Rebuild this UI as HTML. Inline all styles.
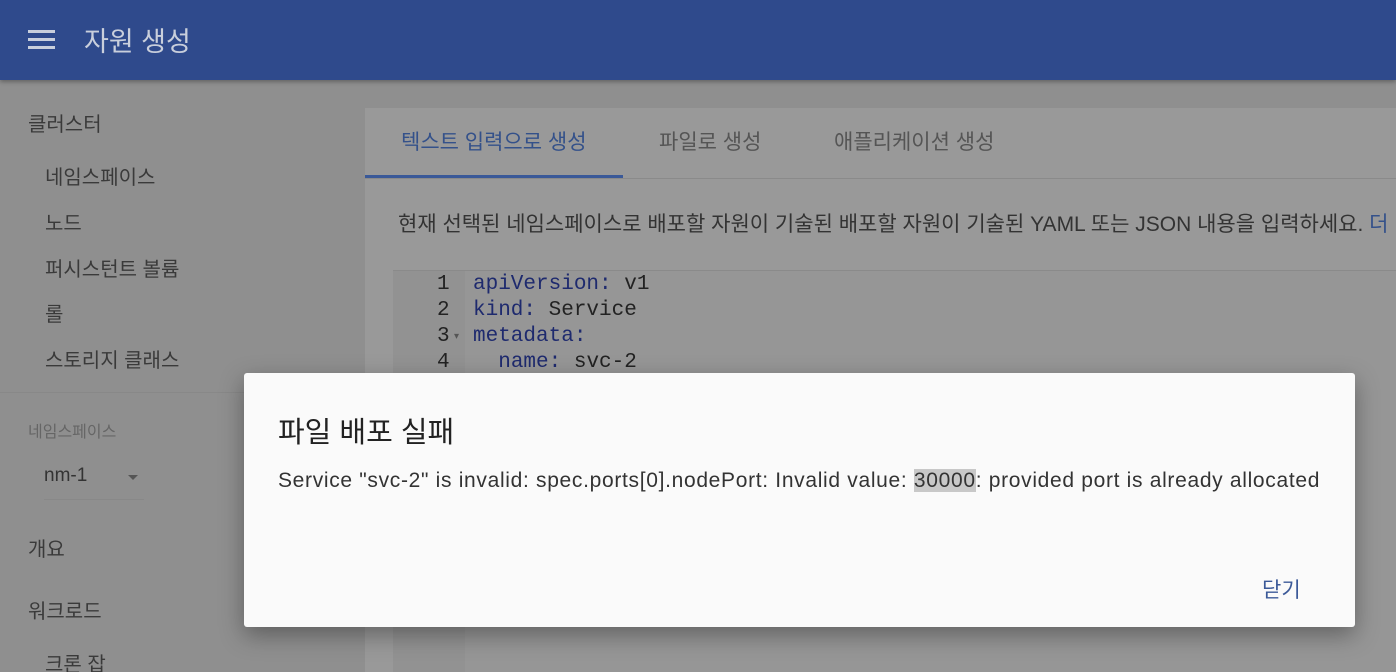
<!DOCTYPE html>
<html><head><meta charset="utf-8"><style>
*{margin:0;padding:0;box-sizing:border-box}
html,body{width:1396px;height:672px;overflow:hidden}
body{background:#8f8f8f;font-family:"Liberation Sans","Noto Sans CJK KR",sans-serif;position:relative}
.hdr{position:absolute;left:0;top:0;width:1396px;height:80px;background:#2f4a8c;box-shadow:0 2px 4px rgba(0,0,0,.3)}
.hdr .t{position:absolute;left:84px;top:20px;color:#c9cfdc;font-size:27px}
.ham{position:absolute;left:28px;top:30px;width:27px}
.ham i{display:block;height:3px;background:#c9cfdc;margin-bottom:5px}
.s{position:absolute;color:#3a3a3a;font-size:20px;white-space:nowrap}
.card{position:absolute;left:365px;top:108px;width:1040px;height:564px;background:#999}
.tabs{position:absolute;left:0;top:0;width:100%;height:71px;border-bottom:1px solid #8a8a8a}
.tab{position:absolute;top:18px;font-size:21px;color:#555}
.code{position:absolute;left:28px;top:162px;width:1010px;height:420px;background:#969696;border-top:1px solid #8a8a8a}
.gut{position:absolute;left:0;top:0;width:72px;height:100%;background:#929292}
.ln{position:absolute;font-family:"Liberation Mono",monospace;font-size:21px;color:#222;white-space:pre}
.dlg{position:absolute;left:244px;top:373px;width:1111px;height:254px;background:#fafafa;border-radius:3px;box-shadow:0 8px 24px rgba(0,0,0,.35)}
</style></head><body>
<div class="hdr"><div class="ham"><i></i><i></i><i></i></div><div class="t">자원 생성</div></div>
<div class="s" style="left:28px;top:108px">클러스터</div>
<div class="s" style="left:45px;top:161px">네임스페이스</div>
<div class="s" style="left:45px;top:207px">노드</div>
<div class="s" style="left:45px;top:253px">퍼시스턴트 볼륨</div>
<div class="s" style="left:45px;top:298px">롤</div>
<div class="s" style="left:45px;top:344px">스토리지 클래스</div>
<div style="position:absolute;left:0;top:392px;width:365px;height:1px;background:#888"></div>
<div class="s" style="left:28px;top:418px;font-size:16px;color:#666">네임스페이스</div>
<div class="s" style="left:44px;top:465px;font-size:19px;color:#333">nm-1</div>
<div style="position:absolute;left:128px;top:475px;border:5px solid transparent;border-top-color:#555"></div>
<div style="position:absolute;left:44px;top:499px;width:100px;height:1px;background:#888"></div>
<div class="s" style="left:28px;top:533px">개요</div>
<div class="s" style="left:28px;top:595px">워크로드</div>
<div class="s" style="left:45px;top:648px">크론 잡</div>
<div class="card">
<div class="tabs">
<div class="tab" style="left:36px;color:#34518a">텍스트 입력으로 생성</div>
<div class="tab" style="left:294px">파일로 생성</div>
<div class="tab" style="left:469px">애플리케이션 생성</div>
<div style="position:absolute;left:0;top:67px;width:258px;height:3px;background:#3a5998"></div>
</div>
<div class="s" style="left:33px;top:100px;font-size:21px;color:#333">현재 선택된 네임스페이스로 배포할 자원이 기술된 배포할 자원이 기술된 YAML 또는 JSON 내용을 입력하세요. <span style="color:#34518a">더</span></div>
<div class="code"><div class="gut"></div>
<div class="ln" style="left:44px;top:2px">1</div><div class="ln" style="left:80px;top:2px"><span style="color:#1e2a6e">apiVersion:</span> v1</div>
<div class="ln" style="left:44px;top:28px">2</div><div class="ln" style="left:80px;top:28px"><span style="color:#1e2a6e">kind:</span> Service</div>
<div class="ln" style="left:44px;top:54px">3</div><div class="ln" style="left:61px;top:60px;font-size:10px;color:#555">▾</div><div class="ln" style="left:80px;top:54px;color:#1e2a6e">metadata:</div>
<div class="ln" style="left:44px;top:80px">4</div><div class="ln" style="left:80px;top:80px">  <span style="color:#1e2a6e">name:</span> svc-2</div>
</div>
</div>
<div class="dlg">
<div style="position:absolute;left:34px;top:36px;font-size:29px;color:#222">파일 배포 실패</div>
<div style="position:absolute;left:34px;top:96px;font-size:21px;color:#333;white-space:nowrap;letter-spacing:0.68px">Service "svc-2" is invalid: spec.ports[0].nodePort: Invalid value: <span style="background:#c8c8c8">30000</span>: provided port is already allocated</div>
<div style="position:absolute;left:1018px;top:201px;font-size:21px;color:#3b5998">닫기</div>
</div>
</body></html>
